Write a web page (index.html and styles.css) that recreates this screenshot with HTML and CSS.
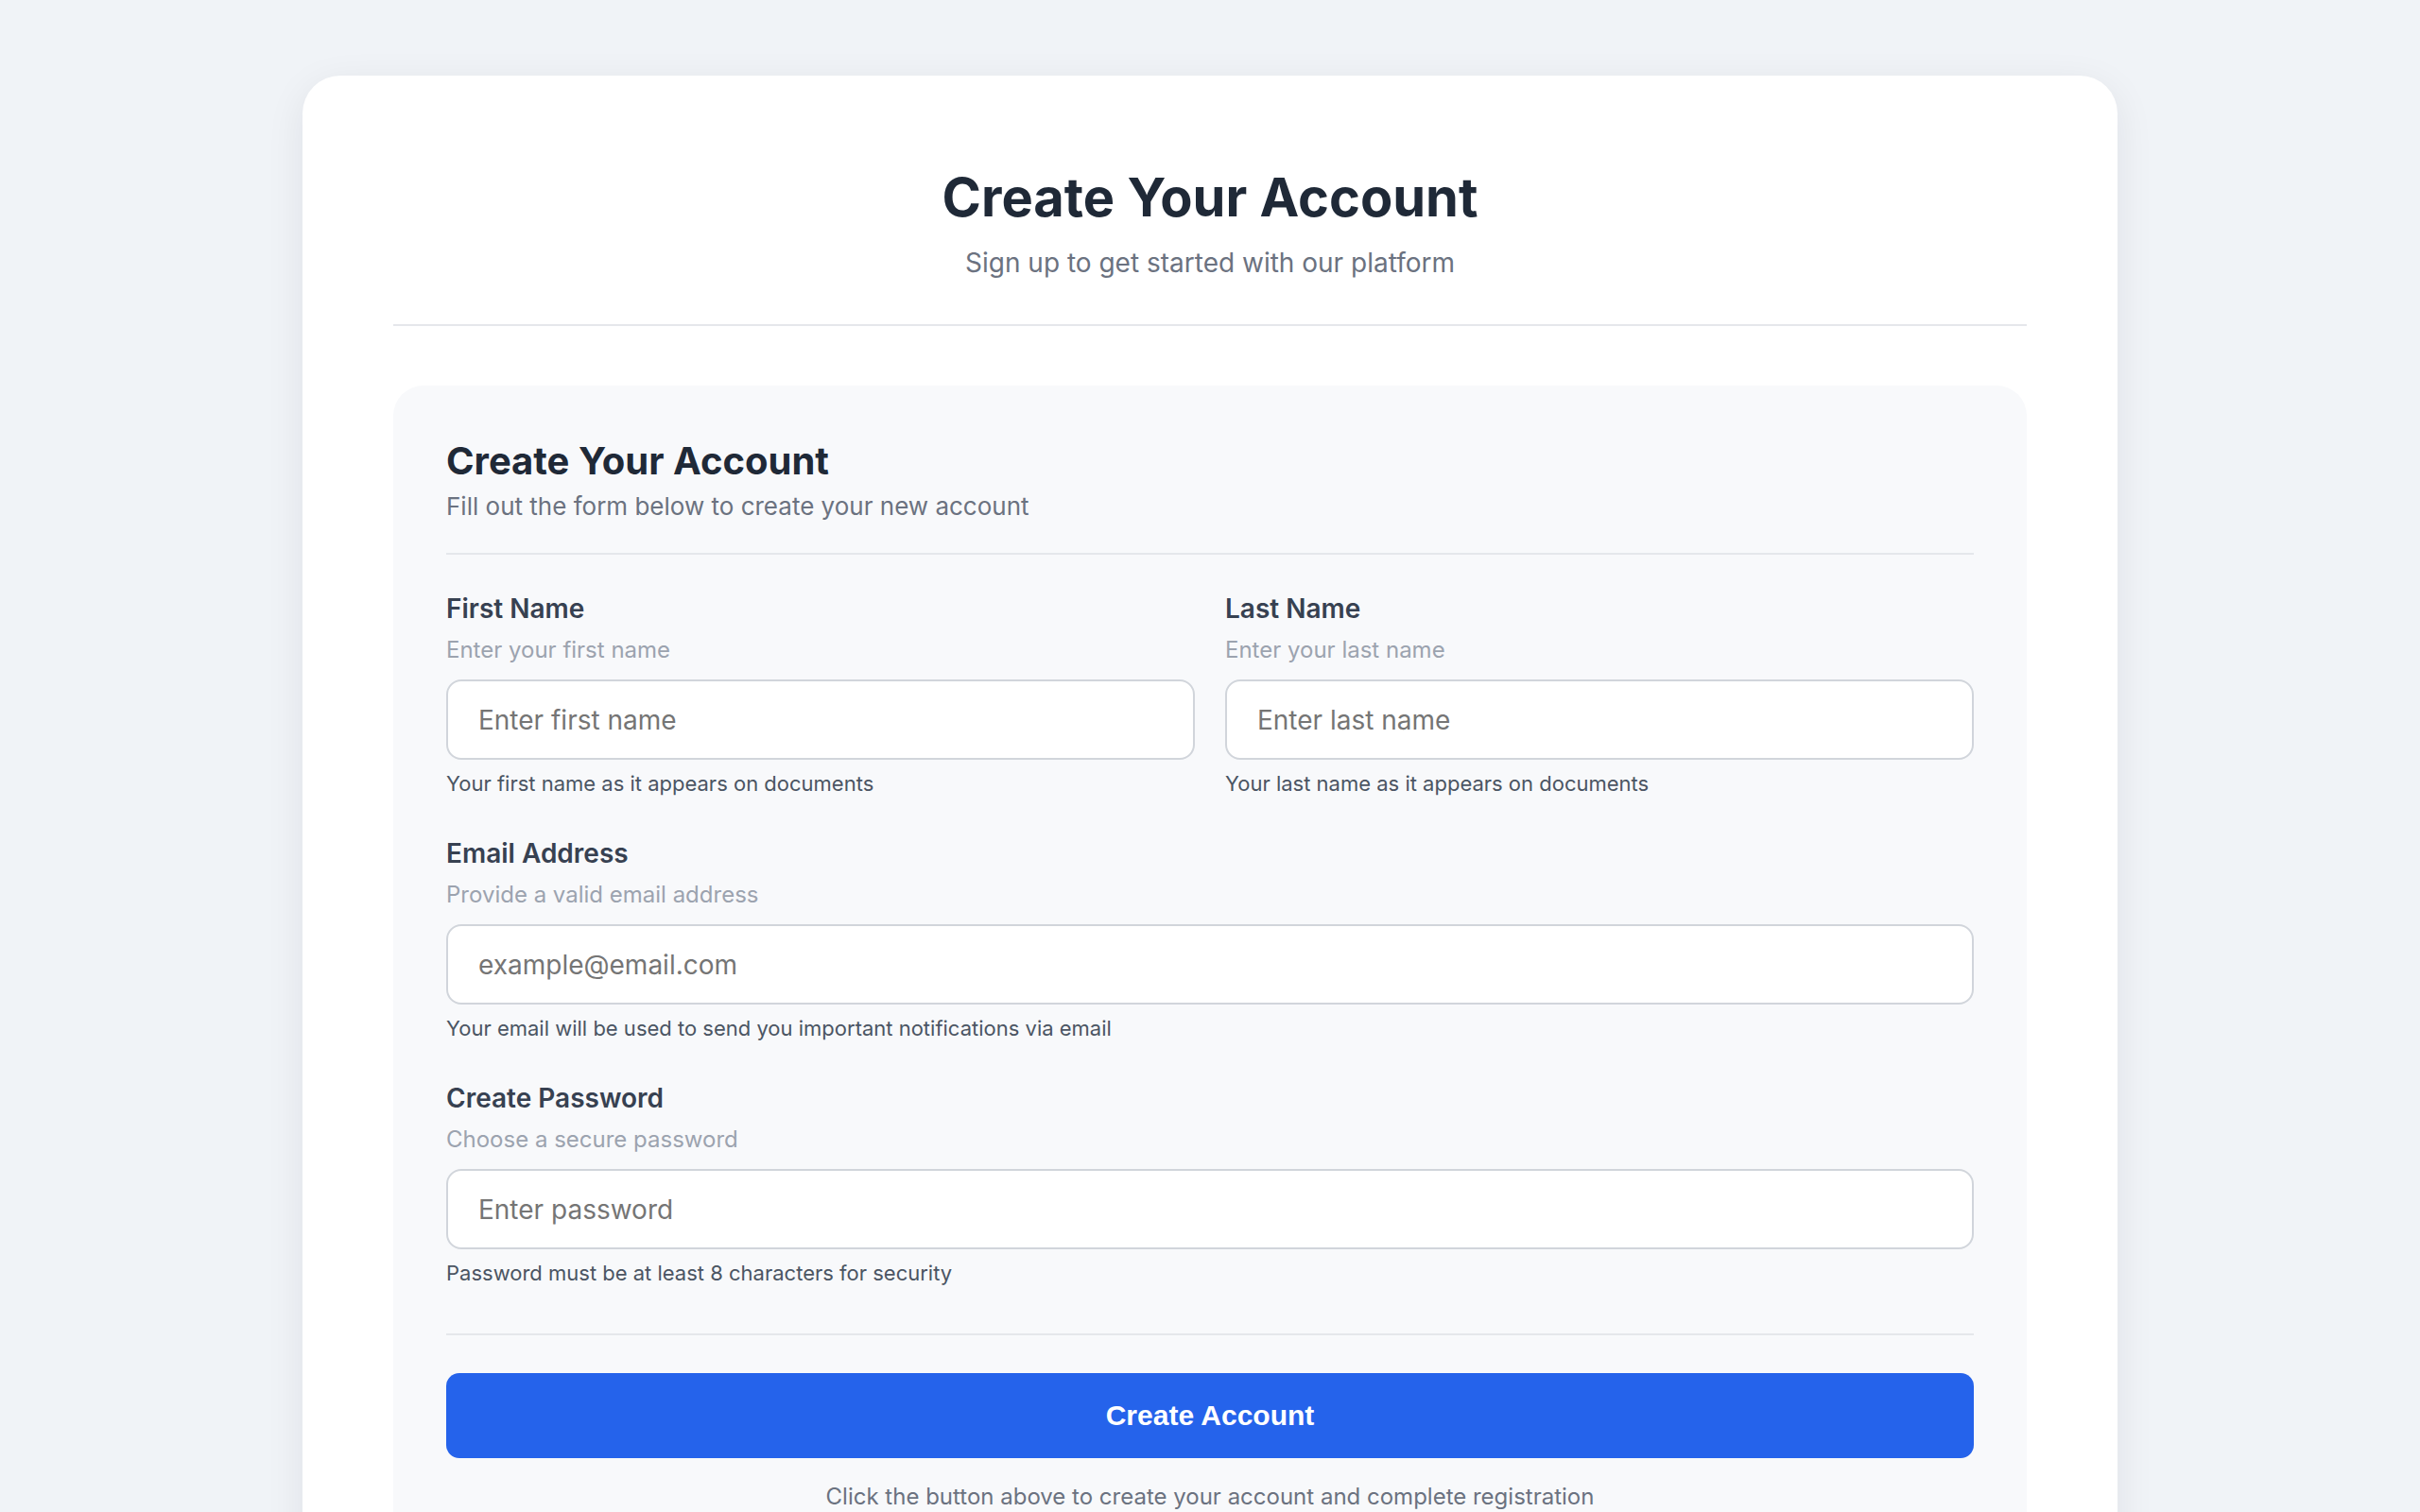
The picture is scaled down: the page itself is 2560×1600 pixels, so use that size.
FILE: index.html
```html
<!DOCTYPE html>
<html lang="en">
<head>
  <meta charset="UTF-8">
  <meta name="viewport" content="width=device-width, initial-scale=1.0">
  <title>Create Your Account</title>
  <link rel="stylesheet" href="styles.css">
</head>
<body>
  <div class="card">
    <div class="header">
      <h1>Create Your Account</h1>
      <p class="subtitle">Sign up to get started with our platform</p>
    </div>

    <form class="form-box">
      <div class="form-head">
        <h2>Create Your Account</h2>
        <p>Fill out the form below to create your new account</p>
      </div>

      <div class="row">
        <div class="field">
          <label for="first-name">First Name</label>
          <div class="hint">Enter your first name</div>
          <input type="text" id="first-name" placeholder="Enter first name">
          <div class="help">Your first name as it appears on documents</div>
        </div>
        <div class="field">
          <label for="last-name">Last Name</label>
          <div class="hint">Enter your last name</div>
          <input type="text" id="last-name" placeholder="Enter last name">
          <div class="help">Your last name as it appears on documents</div>
        </div>
      </div>

      <div class="field">
        <label for="email">Email Address</label>
        <div class="hint">Provide a valid email address</div>
        <input type="email" id="email" placeholder="example@email.com">
        <div class="help">Your email will be used to send you important notifications via email</div>
      </div>

      <div class="field">
        <label for="password">Create Password</label>
        <div class="hint">Choose a secure password</div>
        <input type="password" id="password" placeholder="Enter password">
        <div class="help">Password must be at least 8 characters for security</div>
      </div>

      <div class="actions">
        <button type="submit" class="submit">Create Account</button>
        <p class="note">Click the button above to create your account and complete registration</p>
      </div>
    </form>
  </div>
</body>
</html>
```

FILE: styles.css
```css
* {
  margin: 0;
  padding: 0;
  box-sizing: border-box;
}

body {
  font-family: Inter, "Noto Sans", sans-serif;
  background: #f0f3f7;
  padding-top: 80px;
}

.card {
  width: 1920px;
  margin: 0 auto;
  padding: 96px;
  background: #fff;
  border-radius: 40px;
  box-shadow: 0 10px 40px rgba(15, 23, 42, 0.08);
}

.header {
  text-align: center;
  padding-bottom: 44px;
  border-bottom: 2px solid #e5e7eb;
}

h1 {
  font-size: 56px;
  line-height: 67px;
  font-weight: 700;
  color: #1f2937;
}

.subtitle {
  margin-top: 14px;
  font-size: 28px;
  line-height: 42px;
  color: #6b7280;
}

.form-box {
  margin-top: 63px;
  padding: 56px;
  background: #f8f9fb;
  border-radius: 32px;
}

.form-head {
  padding-bottom: 29px;
  border-bottom: 2px solid #e5e7eb;
  margin-bottom: 38px;
}

.form-head h2 {
  font-size: 40px;
  line-height: 48px;
  font-weight: 700;
  color: #1f2937;
}

.form-head p {
  margin-top: 4px;
  font-size: 26px;
  line-height: 40px;
  color: #6b7280;
}

.row {
  display: grid;
  grid-template-columns: 1fr 1fr;
  gap: 32px;
}

.field {
  display: flex;
  flex-direction: column;
  margin-bottom: 39px;
}

.field label {
  font-size: 28px;
  line-height: 38px;
  font-weight: 600;
  color: #374151;
}

.hint {
  margin-top: 8px;
  margin-bottom: 14px;
  font-size: 24px;
  line-height: 34px;
  color: #9ca3af;
}

.field input {
  height: 85px;
  padding: 0 32px;
  font-family: Inter, sans-serif;
  font-size: 28px;
  color: #111827;
  background: #fff;
  border: 2px solid #d1d5db;
  border-radius: 16px;
  outline: none;
}

.field input::placeholder {
  color: #757575;
}

.help {
  margin-top: 9px;
  font-size: 22px;
  line-height: 32px;
  color: #4b5563;
}

.field:last-of-type {
  margin-bottom: 0;
}

.actions {
  border-top: 2px solid #e5e7eb;
  padding-top: 40px;
  margin-top: 48px;
  text-align: center;
}

.submit {
  width: 100%;
  height: 90px;
  font-family: "Liberation Sans", Arial, sans-serif;
  font-size: 30px;
  font-weight: 700;
  color: #fff;
  background: #2563eb;
  border: none;
  border-radius: 14px;
  cursor: pointer;
}

.note {
  margin-top: 23px;
  font-size: 24px;
  line-height: 36px;
  color: #6b7280;
}
```
